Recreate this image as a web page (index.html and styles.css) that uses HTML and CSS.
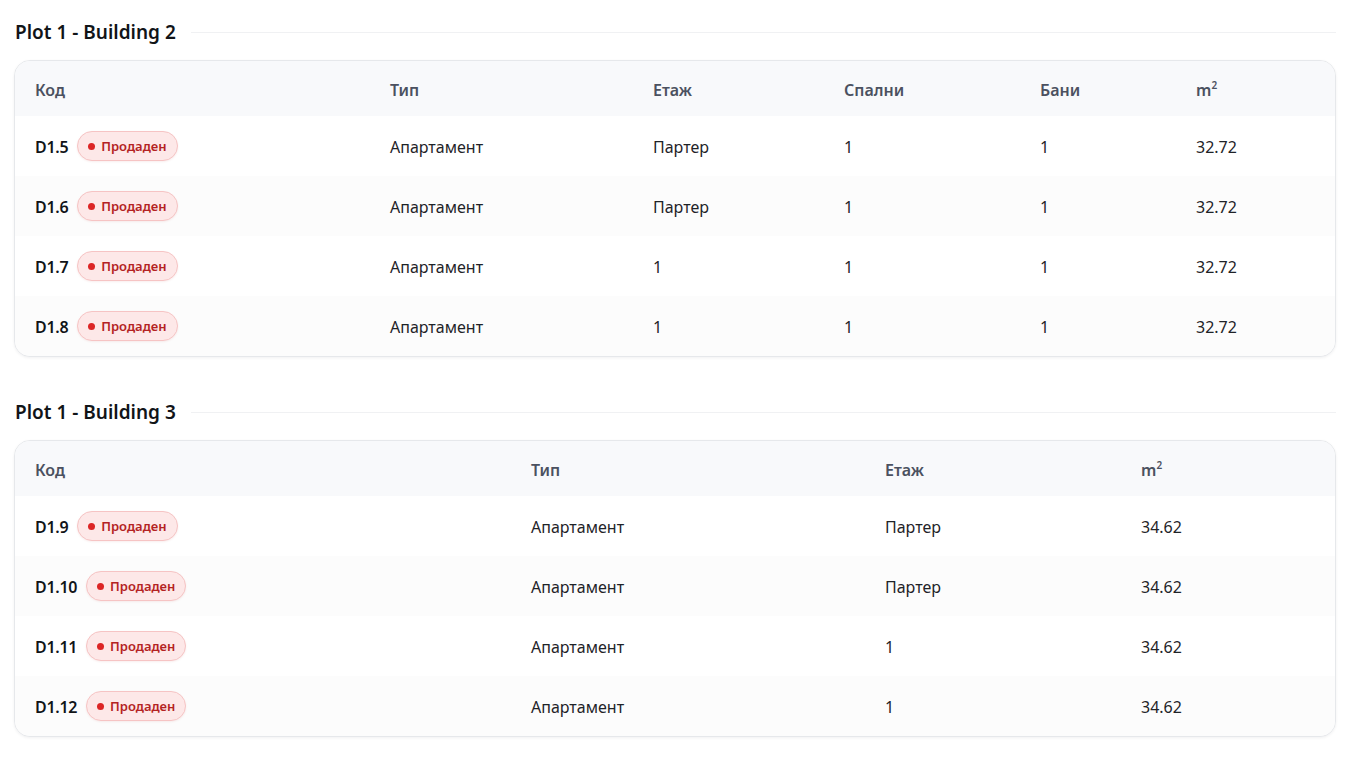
FILE: index.html
```html
<!DOCTYPE html>
<html lang="bg">
<head>
<meta charset="utf-8">
<title>Units</title>
<link rel="stylesheet" href="styles.css">
</head>
<body>
<section class="group">
  <div class="group-head"><h2 class="group-title">Plot 1 - Building 2</h2><span class="group-rule"></span></div>
  <div class="card">
    <table class="units">
      <colgroup><col class="c1-code"><col class="c1-type"><col class="c1-floor"><col class="c1-bed"><col class="c1-bath"><col></colgroup>
      <thead><tr><th>Код</th><th>Тип</th><th>Етаж</th><th>Спални</th><th>Бани</th><th>m<sup>2</sup></th></tr></thead>
      <tbody>
        <tr><td><span class="code">D1.5</span><span class="badge"><span class="dot"></span>Продаден</span></td><td>Апартамент</td><td>Партер</td><td>1</td><td>1</td><td>32.72</td></tr>
        <tr><td><span class="code">D1.6</span><span class="badge"><span class="dot"></span>Продаден</span></td><td>Апартамент</td><td>Партер</td><td>1</td><td>1</td><td>32.72</td></tr>
        <tr><td><span class="code">D1.7</span><span class="badge"><span class="dot"></span>Продаден</span></td><td>Апартамент</td><td>1</td><td>1</td><td>1</td><td>32.72</td></tr>
        <tr><td><span class="code">D1.8</span><span class="badge"><span class="dot"></span>Продаден</span></td><td>Апартамент</td><td>1</td><td>1</td><td>1</td><td>32.72</td></tr>
      </tbody>
    </table>
  </div>
</section>
<section class="group">
  <div class="group-head"><h2 class="group-title">Plot 1 - Building 3</h2><span class="group-rule"></span></div>
  <div class="card">
    <table class="units">
      <colgroup><col class="c2-code"><col class="c2-type"><col class="c2-floor"><col></colgroup>
      <thead><tr><th>Код</th><th>Тип</th><th>Етаж</th><th>m<sup>2</sup></th></tr></thead>
      <tbody>
        <tr><td><span class="code">D1.9</span><span class="badge"><span class="dot"></span>Продаден</span></td><td>Апартамент</td><td>Партер</td><td>34.62</td></tr>
        <tr><td><span class="code">D1.10</span><span class="badge"><span class="dot"></span>Продаден</span></td><td>Апартамент</td><td>Партер</td><td>34.62</td></tr>
        <tr><td><span class="code">D1.11</span><span class="badge"><span class="dot"></span>Продаден</span></td><td>Апартамент</td><td>1</td><td>34.62</td></tr>
        <tr><td><span class="code">D1.12</span><span class="badge"><span class="dot"></span>Продаден</span></td><td>Апартамент</td><td>1</td><td>34.62</td></tr>
      </tbody>
    </table>
  </div>
</section>
</body>
</html>
```
FILE: styles.css
```css
* { box-sizing: border-box; }
html, body { background: #ffffff; }
body {
  margin: 0;
  padding: 20px 19px 0 14px;
  font-family: "Noto Sans", "Open Sans", "Liberation Sans", sans-serif;
  color: #1f2328;
}
.group { margin-bottom: 43px; }
.group-head {
  display: flex;
  align-items: center;
  gap: 15px;
  height: 24px;
  margin-bottom: 16px;
}
.group-title {
  margin: 0 0 0 1px;
  font-size: 19px;
  line-height: 24px;
  font-weight: 600;
  color: #111418;
  white-space: nowrap;
  letter-spacing: 0;
}
.group-rule {
  flex: 1;
  height: 1px;
  background: #f0f1f3;
}
.card {
  border: 1px solid #e6e8eb;
  border-radius: 16px;
  overflow: hidden;
  box-shadow: 0 1px 3px rgba(15, 23, 42, 0.06);
  background: #fff;
}
.units {
  width: 100%;
  border-collapse: collapse;
  table-layout: fixed;
}
.c1-code { width: 355px; }
.c1-type { width: 263px; }
.c1-floor { width: 191px; }
.c1-bed { width: 196px; }
.c1-bath { width: 156px; }
.c2-code { width: 496px; }
.c2-type { width: 354px; }
.c2-floor { width: 256px; }
.units th {
  height: 55px;
  padding: 2px 0 0 20px;
  text-align: left;
  font-size: 16px;
  font-weight: 600;
  color: #4b5160;
  background: #f8f9fb;
}
.units th sup {
  font-size: 10px;
  vertical-align: 7px;
  line-height: 0;
}
.units td {
  height: 60px;
  padding: 2px 0 0 20px;
  font-size: 16px;
  color: #1f2328;
  white-space: nowrap;
}
.units tbody tr:nth-child(even) td { background: #fcfcfc; }
.code {
  font-weight: 600;
  color: #111418;
  margin-right: 9px;
  vertical-align: middle;
  letter-spacing: -0.3px;
}
.badge {
  display: inline-flex;
  align-items: center;
  gap: 6px;
  height: 30px;
  margin-top: -2px;
  padding: 0 10px 0 10px;
  border-radius: 15px;
  background: #fde8e8;
  border: 1px solid #f6c4c4;
  color: #b42323;
  font-size: 13px;
  font-weight: 600;
  vertical-align: middle;
  box-shadow: 0 1px 2px rgba(180, 35, 35, 0.08);
}
.dot {
  width: 7px;
  height: 7px;
  border-radius: 50%;
  background: #dc2626;
}
```
